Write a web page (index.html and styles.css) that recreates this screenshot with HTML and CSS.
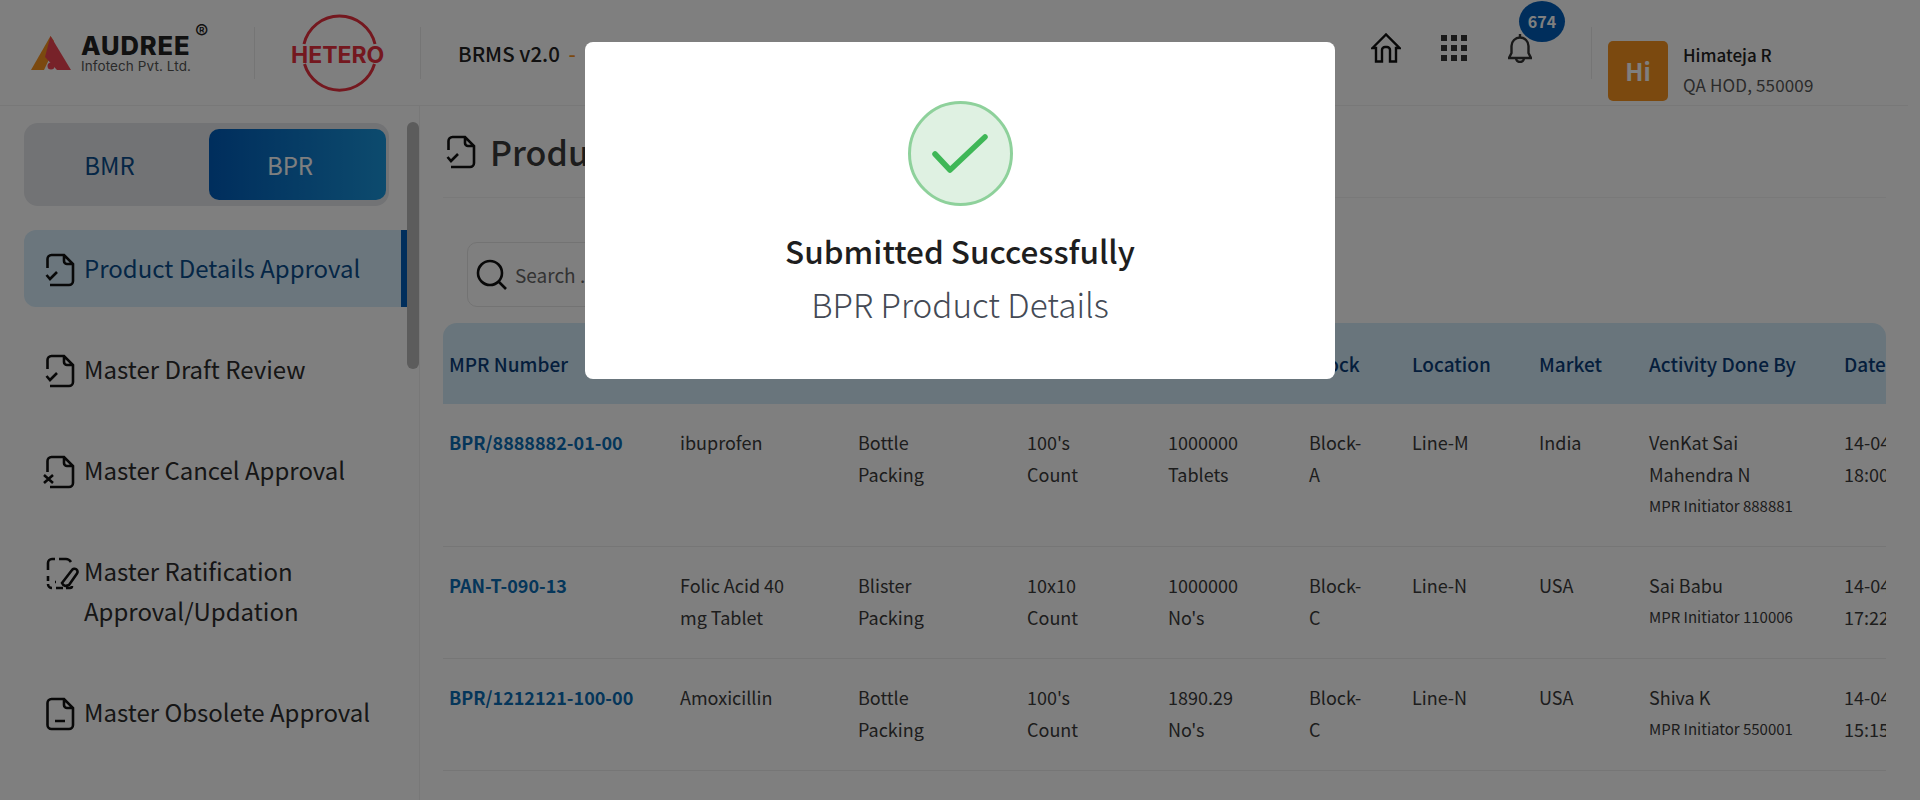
FILE: index.html
```html
<!DOCTYPE html>
<html lang="en">
<head>
    <meta charset="UTF-8">
    <title>BRMS v2.0</title>
    <link rel="stylesheet" href="styles.css">
</head>
<body>

    <header class="topbar">
        <div class="brand">
            <svg class="brand-mark" width="40" height="35" viewBox="0 0 40 35">
                <path class="mark-orange" d="M19.5 0 L0 34 H13 L22 15 L23 5 Z"></path>
                <path class="mark-red" d="M19.5 0 L40 34 H26 L14 21 Z"></path>
                <circle class="mark-red" cx="20" cy="30" r="3.5"></circle>
            </svg>
            <div class="brand-text">
                <div class="brand-name">AUDREE<sup>®</sup></div>
                <div class="brand-sub">Infotech Pvt. Ltd.</div>
            </div>
        </div>
        <div class="client-logo">
            <svg width="92" height="76" viewBox="0 0 92 76">
                <path class="ring" d="M13 29 A36.5 36.5 0 0 1 84 29"></path>
                <path class="ring" d="M13.5 49 A36.5 36.5 0 0 0 83.5 49"></path>
                <text class="ring-text" x="0" y="48">HETERO</text>
            </svg>
        </div>
        <div class="app-name">BRMS v2.0 <span class="app-dash">-</span></div>
        <div class="top-icons">
            <svg class="top-icon" width="30" height="30" viewBox="0 0 30 30">
                <path d="M1.5 15 L15 1.5 L28.5 15 H25 V28.5 H19 V17 a3 3 0 0 0 -3 -3 H14 a3 3 0 0 0 -3 3 V28.5 H5 V15 Z"></path>
            </svg>
            <div class="dots">
                <i></i><i></i><i></i><i></i><i></i><i></i><i></i><i></i><i></i>
            </div>
            <div class="bell">
                <svg class="top-icon bell-icon" width="24" height="30" viewBox="0 0 24 30">
                    <path d="M12 1 V4 M3.5 20 V13 a8.5 8.5 0 0 1 17 0 V20 L23 25 H1 Z M8 25 a4 4 0 0 0 8 0"></path>
                </svg>
                <span class="badge">674</span>
            </div>
        </div>
        <div class="user">
            <div class="avatar">Hi</div>
            <div class="user-info">
                <div class="user-name">Himateja R</div>
                <div class="user-role">QA HOD, 550009</div>
            </div>
        </div>
    </header>

    <div class="layout">
        <aside class="sidebar">
            <div class="toggle">
                <div class="toggle-btn">BMR</div>
                <div class="toggle-btn active">BPR</div>
            </div>
            <ul class="menu">
                <li class="menu-item active">
                    <svg class="menu-icon" width="30" height="34" viewBox="0 0 30 34">
                        <path d="M3.5 15 V6 a4 4 0 0 1 4 -4 H20 L29 11 V28 a4 4 0 0 1 -4 4 H6 M20 2 V8 a3 3 0 0 0 3 3 H29 M2.5 22 L6 26 L13 19"></path>
                    </svg>
                    <span>Product Details Approval</span>
                </li>
                <li class="menu-item">
                    <svg class="menu-icon" width="30" height="34" viewBox="0 0 30 34">
                        <path d="M3.5 15 V6 a4 4 0 0 1 4 -4 H20 L29 11 V28 a4 4 0 0 1 -4 4 H6 M20 2 V8 a3 3 0 0 0 3 3 H29 M2.5 22 L6 26 L13 19"></path>
                    </svg>
                    <span>Master Draft Review</span>
                </li>
                <li class="menu-item">
                    <svg class="menu-icon" width="30" height="34" viewBox="0 0 30 34">
                        <path d="M3.5 17 V6 a4 4 0 0 1 4 -4 H20 L29 11 V28 a4 4 0 0 1 -4 4 H6 M20 2 V8 a3 3 0 0 0 3 3 H29 M0 20 L9 28 M9 20 L0 28"></path>
                    </svg>
                    <span>Master Cancel Approval</span>
                </li>
                <li class="menu-item">
                    <svg class="menu-icon" width="30" height="34" viewBox="0 0 30 34">
                        <path d="M4 14 V7 a4 4 0 0 1 4 -4 H11 M15 3 H22 Q25 3 27 6 M4 20 V25 M4 28 a4 4 0 0 0 4 4 M12 32 H19 M22 32 H26 a2 2 0 0 0 2 -2 M11 26 H12"></path>
                        <path d="M18 27 L28 14 a3 3 0 0 1 5 3.5 L25 29 Q20 31.5 18 27 Z"></path>
                    </svg>
                    <span>Master Ratification Approval/Updation</span>
                </li>
                <li class="menu-item">
                    <svg class="menu-icon" width="30" height="34" viewBox="0 0 30 34">
                        <path d="M3.5 6 a4 4 0 0 1 4 -4 H20 L29 11 V28 a4 4 0 0 1 -4 4 H7.5 a4 4 0 0 1 -4 -4 Z M20 2 V8 a3 3 0 0 0 3 3 H29 M11 24 H21"></path>
                    </svg>
                    <span>Master Obsolete Approval</span>
                </li>
            </ul>
            <div class="side-scroll"></div>
        </aside>

        <main class="content">
            <div class="page-title">
                <svg class="menu-icon" width="30" height="34" viewBox="0 0 30 34">
                    <path d="M3.5 15 V6 a4 4 0 0 1 4 -4 H20 L29 11 V28 a4 4 0 0 1 -4 4 H6 M20 2 V8 a3 3 0 0 0 3 3 H29 M2.5 22 L6 26 L13 19"></path>
                </svg>
                <h1>Product Details Approval</h1>
            </div>
            <section class="card">
                <div class="search-row">
                    <div class="search">
                        <svg class="search-icon" width="32" height="32" viewBox="0 0 32 32">
                            <circle cx="14" cy="14" r="12"></circle>
                            <path d="M23 23 L30 30"></path>
                        </svg>
                        <span>Search ...</span>
                    </div>
                </div>
                <div class="grid-wrap">
                    <table class="grid">
                        <colgroup>
                            <col class="c-number"><col class="c-name"><col class="c-pack"><col class="c-size"><col class="c-batch"><col class="c-block"><col class="c-loc"><col class="c-market"><col class="c-user"><col class="c-date">
                        </colgroup>
                        <thead>
                            <tr>
                                <th>MPR Number</th>
                                <th>Product Name</th>
                                <th>Packing Type</th>
                                <th>Pack Size</th>
                                <th>Batch Size</th>
                                <th>Block</th>
                                <th>Location</th>
                                <th>Market</th>
                                <th>Activity Done By</th>
                                <th>Date</th>
                            </tr>
                        </thead>
                        <tbody>
                            <tr class="row-tall">
                                <td><a class="mpr">BPR/8888882-01-00</a></td>
                                <td>ibuprofen</td>
                                <td>Bottle Packing</td>
                                <td>100's Count</td>
                                <td>1000000 Tablets</td>
                                <td>Block-A</td>
                                <td>Line-M</td>
                                <td>India</td>
                                <td>VenKat Sai Mahendra N<small>MPR Initiator 888881</small></td>
                                <td>14-04-2025 18:00:12</td>
                            </tr>
                            <tr>
                                <td><a class="mpr">PAN-T-090-13</a></td>
                                <td>Folic Acid 40 mg Tablet</td>
                                <td>Blister Packing</td>
                                <td>10x10 Count</td>
                                <td>1000000 No's</td>
                                <td>Block-C</td>
                                <td>Line-N</td>
                                <td>USA</td>
                                <td>Sai Babu<small>MPR Initiator 110006</small></td>
                                <td>14-04-2025 17:22:40</td>
                            </tr>
                            <tr>
                                <td><a class="mpr">BPR/1212121-100-00</a></td>
                                <td>Amoxicillin</td>
                                <td>Bottle Packing</td>
                                <td>100's Count</td>
                                <td>1890.29 No's</td>
                                <td>Block-C</td>
                                <td>Line-N</td>
                                <td>USA</td>
                                <td>Shiva K<small>MPR Initiator 550001</small></td>
                                <td>14-04-2025 15:15:08</td>
                            </tr>
                        </tbody>
                    </table>
                </div>
            </section>
        </main>
    </div>

    <!-- success popup -->
    <div class="overlay">
        <div class="modal">
            <div class="modal-check">
                <svg width="56" height="40" viewBox="0 0 56 40">
                    <path d="M3 20 L18 36 L53 3"></path>
                </svg>
            </div>
            <div class="modal-title">Submitted Successfully</div>
            <div class="modal-sub">BPR Product Details</div>
        </div>
    </div>

</body>
</html>
```

FILE: styles.css
```css
:root {
    --navy: #005cb8;
    --text: #3a3a3a;
    --font-family: "Noto Sans CJK JP", "Noto Sans", sans-serif;
}

* {
    box-sizing: border-box;
}

html, body {
    height: 100%;
}

body {
    margin: 0;
    overflow: hidden;
    background-color: #fff;
    font-family: var(--font-family);
    color: var(--text);
}

/* --- top bar --- */
.topbar {
    display: flex;
    align-items: center;
    width: 1908px;
    height: 106px;
    border-bottom: 1px solid #f0f0f0;
}

.brand {
    display: flex;
    align-items: center;
    gap: 10px;
    width: 255px;
    height: 52px;
    padding-left: 31px;
    border-right: 1px solid #eaeaea;
}

.brand-mark {
    margin-top: 2px;
}

.mark-orange {
    fill: #f7921e;
}

.mark-red {
    fill: #ee4553;
}

.brand-name {
    position: relative;
    font-family: Inter, sans-serif;
    font-size: 25.5px;
    font-weight: 800;
    line-height: 27px;
    letter-spacing: 0.9px;
    color: #222;
}

.brand-name sup {
    position: absolute;
    left: 114px;
    top: -12px;
    font-size: 20px;
    font-weight: 400;
    line-height: 24px;
}

.brand-sub {
    font-family: Inter, sans-serif;
    font-size: 13.5px;
    line-height: 15px;
    letter-spacing: 0.1px;
    color: #555;
    white-space: nowrap;
}

.client-logo {
    display: flex;
    justify-content: center;
    align-items: center;
    width: 166px;
    height: 52px;
    padding-right: 2px;
    border-right: 1px solid #eaeaea;
}

.client-logo svg {
    overflow: visible;
}

.ring {
    fill: none;
    stroke: #e8303e;
    stroke-width: 3px;
}

.ring-text {
    font-family: Inter, sans-serif;
    font-size: 23px;
    font-weight: 700;
    fill: #e8303e;
}

.app-name {
    margin-left: 37px;
    width: 913px;
    font-size: 20.5px;
    font-weight: 500;
    color: #222;
}

.app-dash {
    margin-left: 4px;
    color: #f7931e;
}

.top-icons {
    display: flex;
    align-items: center;
    gap: 40px;
    height: 30px;
    margin-top: -10px;
}

.top-icon {
    display: block;
    fill: none;
    stroke: #111;
    stroke-width: 2.4px;
}

.bell-icon {
    stroke: #333;
}

.dots {
    display: grid;
    grid-template-columns: repeat(3, 6px);
    grid-auto-rows: 6px;
    gap: 4px;
}

.dots i {
    background-color: #333;
}

.bell {
    position: relative;
    left: 1px;
}

.badge {
    position: absolute;
    left: 11px;
    top: -32px;
    display: flex;
    justify-content: center;
    align-items: center;
    width: 46px;
    height: 41px;
    border-radius: 50%;
    background-color: var(--navy);
    color: #fff;
    font-size: 16px;
    font-weight: 700;
}

.user {
    display: flex;
    gap: 15px;
    align-items: center;
    height: 52px;
    margin-left: 60px;
    padding-left: 16px;
    border-left: 1px solid #eaeaea;
}

.avatar {
    display: flex;
    justify-content: center;
    align-items: center;
    width: 60px;
    height: 60px;
    margin-top: 36px;
    border-radius: 5px;
    background-color: #f7931e;
    color: #fff;
    font-size: 24px;
    font-weight: 700;
}

.user-info {
    margin-top: 34px;
    white-space: nowrap;
}

.user-name {
    font-size: 17px;
    font-weight: 500;
    line-height: 30px;
    color: #222;
}

.user-role {
    font-size: 17px;
    line-height: 30px;
    letter-spacing: 0.15px;
    color: #555;
}

/* --- page --- */
.layout {
    display: flex;
    height: 694px;
}

.sidebar {
    position: relative;
    flex-shrink: 0;
    width: 420px;
    padding: 17px 0 0 24px;
    border-right: 1px solid #f0f0f0;
    overflow: hidden;
}

.toggle {
    display: flex;
    justify-content: flex-end;
    width: 365px;
    height: 83px;
    padding: 6px 3px;
    border-radius: 14px;
    background-color: #e4e6ea;
}

.toggle-btn {
    display: flex;
    justify-content: center;
    align-items: center;
    width: 177px;
    border-radius: 10px;
    color: #0a4d8c;
    font-size: 24px;
    padding-right: 15px;
}

.toggle-btn:first-child {
    width: 182px;
    padding-right: 17px;
}

.toggle-btn.active {
    background: linear-gradient(90deg, #005cba, #1a96dc);
    color: #fff;
}

.menu {
    list-style: none;
    margin: 24px 0 0;
    padding: 0;
}

.menu-item {
    display: flex;
    width: 383px;
    gap: 10px;
    padding: 18px 20px 19px 20px;
    margin-bottom: 24px;
    font-size: 24px;
    line-height: 40px;
    color: #2c2c2c;
}

.menu-item.active {
    border-radius: 12px 0 0 12px;
    border-right: 6px solid #005cb8;
    background-color: #d6edfb;
    color: #0a4d8c;
}

.menu-icon {
    flex-shrink: 0;
    margin-top: 5px;
    fill: none;
    stroke: #111;
    stroke-width: 2.6px;
    overflow: visible;
}

.side-scroll {
    position: absolute;
    right: 0;
    top: 16px;
    width: 12px;
    height: 247px;
    border-radius: 6px;
    background-color: #b8b8b8;
}

.content {
    width: 1443px;
    margin-left: 23px;
    overflow: hidden;
}

.page-title {
    display: flex;
    align-items: center;
    gap: 15px;
    height: 92px;
    padding-left: 2px;
    border-bottom: 1px solid #f2f2f2;
}

.page-title .menu-icon {
    margin-top: 0;
}

.page-title h1 {
    margin: 0;
    font-size: 34px;
    font-weight: 500;
    color: #3a3a3a;
    white-space: nowrap;
}

.card {
    margin-top: 26px;
    height: 600px;
    border-radius: 14px 14px 0 0;
    background-color: #fff;
}

.search-row {
    padding: 18px 24px 16px;
}

.search {
    display: flex;
    align-items: center;
    gap: 7px;
    width: 360px;
    height: 65px;
    padding-left: 8px;
    border: 1px solid #e6e6e6;
    border-radius: 10px;
    font-size: 19px;
    color: #666;
}

.search-icon {
    fill: none;
    stroke: #111;
    stroke-width: 2.6px;
}

/* --- table --- */
.grid-wrap {
    border-radius: 14px 14px 0 0;
    overflow: hidden;
}

.grid {
    width: 1553px;
    table-layout: fixed;
    border-collapse: collapse;
    font-size: 18px;
    line-height: 32px;
}

.c-number { width: 231px; }
.c-name { width: 178px; }
.c-pack { width: 169px; }
.c-size { width: 141px; }
.c-batch { width: 141px; }
.c-block { width: 103px; }
.c-loc { width: 127px; }
.c-market { width: 110px; }
.c-user { width: 195px; }
.c-date { width: 158px; }

.grid thead tr {
    height: 81px;
    background-color: #d2eaf8;
}

.grid th {
    padding: 0 6px;
    text-align: left;
    font-weight: 500;
    font-size: 19px;
    color: #0a3d78;
    white-space: nowrap;
    overflow: hidden;
}

.grid td {
    padding: 22px 55px 0 6px;
    vertical-align: top;
    border-bottom: 1px solid #ededed;
}

.grid td:first-child,
.grid td:last-child {
    padding-right: 10px;
}

.grid td:nth-child(6) {
    padding-right: 38px;
}

.grid td:nth-child(9) {
    padding-right: 30px;
}

.grid tbody tr {
    height: 112px;
}

.grid tbody tr.row-tall {
    height: 142px;
}

.mpr {
    font-weight: 700;
    color: #0a6cb4;
}

.grid small {
    display: block;
    font-size: 15px;
    line-height: 32px;
}

/* --- popup --- */
.overlay {
    position: fixed;
    inset: 0;
    display: flex;
    justify-content: center;
    align-items: flex-start;
    padding-top: 42px;
    background-color: rgba(0, 0, 0, 0.5);
}

.modal {
    display: flex;
    flex-direction: column;
    align-items: center;
    width: 750px;
    height: 337px;
    padding-top: 59px;
    border-radius: 8px;
    background-color: #fff;
}

.modal-check {
    display: flex;
    justify-content: center;
    align-items: center;
    width: 105px;
    height: 105px;
    border: 3px solid #8ed19b;
    border-radius: 50%;
    background-color: #dff1e2;
}

.modal-check svg {
    fill: none;
    stroke: #3fb757;
    stroke-width: 5.5px;
    stroke-linecap: round;
    stroke-linejoin: round;
}

.modal-title {
    margin-top: 19px;
    font-size: 31.5px;
    font-weight: 500;
    line-height: 50px;
    color: #1e1e1e;
}

.modal-sub {
    margin-top: 4px;
    font-size: 33.3px;
    font-weight: 300;
    line-height: 50px;
    color: #444a55;
}
```
